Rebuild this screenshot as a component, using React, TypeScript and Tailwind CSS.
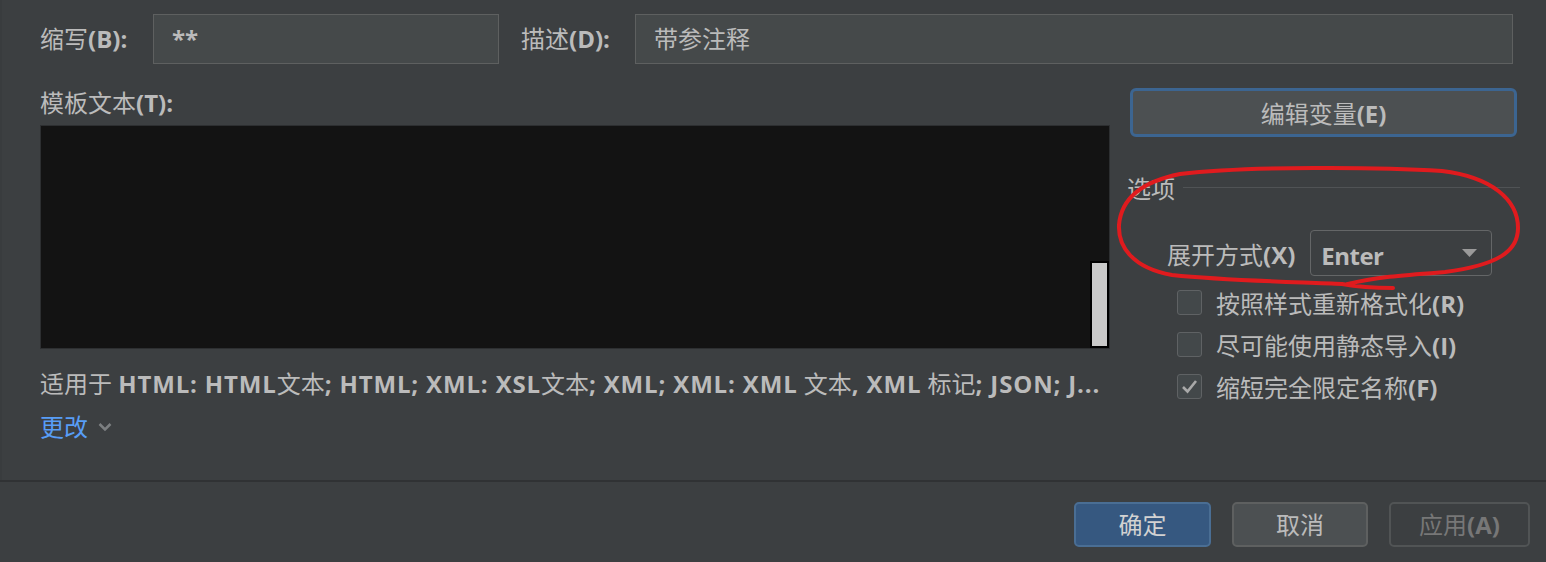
import React from 'react';

const font = "font-['Open_Sans','Noto_Sans_CJK_SC',sans-serif]";

function Checkbox({ label, mnemonic, checked }: { label: string; mnemonic: string; checked?: boolean }) {
  return (
    <div className="h-[42px] flex items-center pl-[50px]">
      <div className="w-[25px] h-[25px] rounded-[3px] border border-[#5f6264] bg-[#43484a] flex items-center justify-center">
        {checked && (
          <svg width="17" height="15" viewBox="0 0 17 15">
            <polyline points="2,8 6.5,12.5 15,2" fill="none" stroke="#a9a9a9" strokeWidth="2.6" />
          </svg>
        )}
      </div>
      <span className="ml-[14px] pt-[4px] text-[24px] leading-none">
        {label}
        <b>({mnemonic})</b>
      </span>
    </div>
  );
}

export default function App() {
  return (
    <div className={`relative w-[1546px] h-[562px] bg-[#3c3f41] text-[#bbbbbb] overflow-hidden flex flex-col ${font}`}>
      {/* Main */}
      <div className="h-[480px] border-l-2 border-[#393c3e] pl-[38px] pt-[14px] flex flex-col">
        {/* Abbreviation + description */}
        <div className="flex items-center h-[50px]">
          <div className="w-[113px] text-[24px] leading-none">
            缩写<b>(B):</b>
          </div>
          <div className="w-[346px] h-[50px] border border-[#5e6060] bg-[#45494a] flex items-center pl-[18px] text-[24px]">
            <b className="text-[#bbbbbb]">**</b>
          </div>
          <div className="ml-[22px] w-[114px] text-[24px] leading-none">
            描述<b>(D):</b>
          </div>
          <div className="w-[878px] h-[50px] border border-[#5e6060] bg-[#45494a] flex items-center pl-[18px] text-[24px]">
            带参注释
          </div>
        </div>

        <div className="flex mt-[24px]">
          {/* Template text column */}
          <div className="w-[1070px] flex flex-col">
            <div className="h-[37px] leading-[30px] text-[24px]">
              模板文本<b>(T):</b>
            </div>
            <div className="h-[224px] border border-[#2d2f31] bg-[#131313] flex">
              <div className="flex-1" />
              <div className="w-[19px] flex flex-col justify-end">
                <div className="h-[87px] border-2 border-black bg-[#c9c9c9]" />
              </div>
            </div>
            <div className="mt-[17px] h-[36px] leading-[36px] text-[24px] whitespace-nowrap">
              适用于 <b className="tracking-[0.85px]">HTML: HTML</b>文本<b className="tracking-[0.85px]">; HTML; XML: XSL</b>文本<b className="tracking-[0.85px]">; XML; XML: XML</b> 文本<b className="tracking-[0.85px]">, XML</b> 标记<b className="tracking-[0.85px]">; JSON; J...</b>
            </div>
            <div className="mt-[7px] h-[36px] flex items-center text-[24px] text-[#589df6]">
              更改
              <svg className="ml-[10px]" width="14" height="10" viewBox="0 0 14 10">
                <polyline points="1.5,2 7,7.5 12.5,2" fill="none" stroke="#7c7f81" strokeWidth="2.5" />
              </svg>
            </div>
          </div>

          {/* Options column */}
          <div className="ml-[17px] w-[393px] flex flex-col">
            <button className="ml-[3px] w-[387px] h-[49px] rounded-[6px] border-[3px] border-[#3c6591] bg-[#4c5052] text-[24px] text-[#bbbbbb] pt-[2px]">
              编辑变量<b>(E)</b>
            </button>
            <div className="mt-[37px] h-[30px] flex items-center text-[24px]">
              <span className="leading-none">选项</span>
              <div className="ml-[8px] mb-[4px] flex-1 h-px bg-[#505355]" />
            </div>
            <div className="mt-[26px] flex items-center pl-[40px]">
              <span className="text-[24px] leading-none pt-[4px]">
                展开方式<b>(X)</b>
              </span>
              <div className="ml-[15px] w-[182px] h-[46px] rounded-[4px] border border-[#646667] flex items-center justify-between pl-[10px] pr-[14px]">
                <b className="text-[24px] pt-[5px] tracking-[-0.5px]">Enter</b>
                <svg width="15" height="8" viewBox="0 0 15 8">
                  <polygon points="0,0 15,0 7.5,8" fill="#9a9a9a" />
                </svg>
              </div>
            </div>
            <div className="mt-[5px] flex flex-col">
              <Checkbox label="按照样式重新格式化" mnemonic="R" />
              <Checkbox label="尽可能使用静态导入" mnemonic="I" />
              <Checkbox label="缩短完全限定名称" mnemonic="F" checked />
            </div>
          </div>
        </div>
      </div>

      {/* Footer */}
      <div className="flex-1 border-t-2 border-[#303234] flex justify-end items-start pt-[20px] pr-[16px] gap-[21px]">
        <button className="w-[137px] h-[45px] rounded-[5px] border-2 border-[#4a6e94] bg-[#365880] text-[24px] text-[#d2d2d2]">
          确定
        </button>
        <button className="w-[136px] h-[45px] rounded-[5px] border-2 border-[#5e6060] bg-[#4c5052] text-[24px] text-[#bbbbbb]">
          取消
        </button>
        <button className="w-[141px] h-[45px] rounded-[5px] border-2 border-[#515455] text-[24px] text-[#777777]">
          应用<b>(A)</b>
        </button>
      </div>

      {/* Red hand-drawn annotation */}
      <svg className="absolute inset-0 pointer-events-none" width="1546" height="562" viewBox="0 0 1546 562">
        <path
          d="M 1393 288 C 1375 288, 1358 287, 1342 284 C 1300 282, 1230 281, 1172 275 C 1132 268, 1118 246, 1119 225 C 1121 200, 1140 182, 1180 174 C 1250 166, 1380 167, 1442 171 C 1492 177, 1518 200, 1518 228 C 1518 252, 1497 265, 1445 272 C 1405 275, 1375 277, 1348 284"
          fill="none"
          stroke="#e01b1e"
          strokeWidth="4"
          strokeLinecap="round"
        />
      </svg>
    </div>
  );
}
